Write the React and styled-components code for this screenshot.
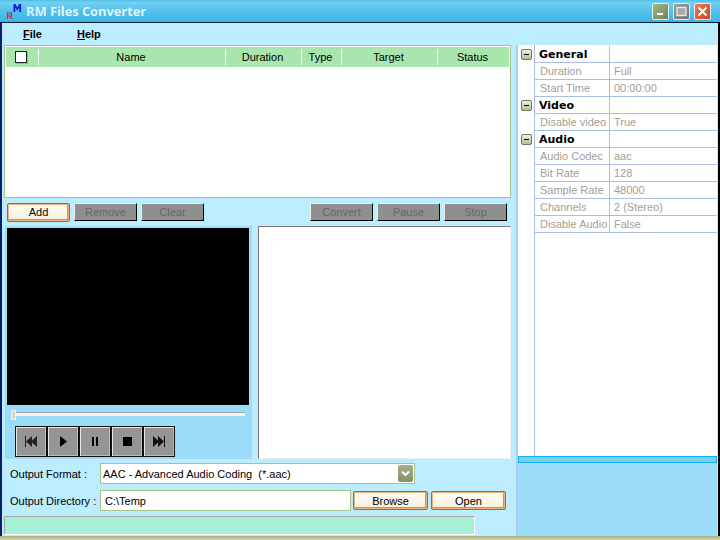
import React from 'react';
import styled, { createGlobalStyle } from 'styled-components';

const GlobalStyle = createGlobalStyle`
  html, body { margin: 0; padding: 0; width: 720px; height: 540px; overflow: hidden; }
  body { font-family: "Liberation Sans", Arial, sans-serif; font-size: 11px; color: #000; }
`;

const Window = styled.div`
  width: 720px;
  height: 540px;
  display: flex;
  flex-direction: column;
  background: #bbedff;
`;

const TitleBar = styled.div`
  height: 22px;
  flex: none;
  display: flex;
  align-items: center;
  padding: 0 9px 0 6px;
  background: linear-gradient(to bottom, #4cc0ea 0, #74d0f2 12%, #56c2ec 45%, #3cb4e4 100%);
`;

const TitleText = styled.div`
  margin-left: 3px;
  font-family: "Open Sans", sans-serif;
  font-weight: 700;
  font-size: 13px;
  letter-spacing: -0.1px;
  color: #dff4fd;
  flex: 1;
`;

const WinButton = styled.div`
  width: 15px;
  height: 15px;
  margin-left: 4px;
  border: 1px solid #dfeff0;
  border-radius: 2px;
  background: ${({ tone }) => tone};
  display: flex;
  align-items: center;
  justify-content: center;
`;

const Frame = styled.div`
  flex: 1;
  min-height: 0;
  display: flex;
  flex-direction: column;
  border-top: 1px solid #0a1a33;
  border-left: 2px solid #0b1f66;
  border-right: 2px solid #000;
`;

const MenuBar = styled.div`
  height: 22px;
  flex: none;
  display: flex;
  align-items: center;
  padding-left: 21px;
  gap: 35px;
  font-weight: 700;
`;

const MenuItem = styled.span`
  u { text-decoration: underline; }
`;

const Body = styled.div`
  flex: 1;
  min-height: 0;
  display: flex;
`;

const LeftPane = styled.div`
  width: 514px;
  flex: none;
  padding-left: 2px;
  box-sizing: border-box;
`;

const ListBox = styled.div`
  width: 507px;
  height: 153px;
  box-sizing: border-box;
  border: 1px solid #a3c587;
  background: #fff;
  padding: 1px 1px 0;
`;

const ListHeader = styled.div`
  height: 20px;
  display: grid;
  grid-template-columns: 33px 187px 76px 40px 96px 1fr;
  background: #a8e6ae;
`;

const HeaderCell = styled.div`
  display: flex;
  align-items: center;
  justify-content: center;
  margin: 2px 0;
  padding-right: 2px;
  border-right: ${({ last }) => (last ? 'none' : '1px solid #fff')};
`;

const CheckBox = styled.span`
  width: 10px;
  height: 10px;
  margin-right: 1px;
  background: #fff;
  border: 1px solid #222;
  box-shadow: 1px 1px 0 #aaa;
`;

const ActionRow = styled.div`
  height: 28px;
  width: 500px;
  margin-left: 3px;
  display: flex;
  align-items: center;
  gap: 4px;
`;

const Spacer = styled.div`
  flex: 1;
`;

const DisabledButton = styled.div`
  width: 63px;
  height: 18px;
  box-sizing: border-box;
  display: flex;
  align-items: center;
  justify-content: center;
  background: #8f8f8f;
  color: #666;
  border: 1px solid;
  border-color: #eee #000 #000 #eee;
`;

const WarmButton = styled.div`
  width: ${({ w }) => w}px;
  height: 19px;
  margin-left: ${({ gap }) => gap || 0}px;
  box-sizing: border-box;
  display: flex;
  align-items: center;
  justify-content: center;
  background: linear-gradient(to bottom, #fffdf4, #f5efdc);
  border: 1px solid #6d7f42;
  border-radius: 2px;
  box-shadow: inset 0 0 0 1px #eeb27a, inset -1px -1px 0 1px #dc8e48;
`;

const MiddleRow = styled.div`
  display: flex;
  gap: 6px;
  padding-left: 1px;
`;

const VideoPanel = styled.div`
  width: 247px;
  height: 233px;
  box-sizing: border-box;
  padding: 2px;
  background: #9bdcf8;
`;

const VideoScreen = styled.div`
  height: 177px;
  width: 242px;
  background: #000;
`;

const SliderTrack = styled.div`
  position: relative;
  height: 3px;
  margin: 7px 5px 0 5px;
  width: 233px;
  background: #f2f4f4;
  border-top: 1px solid #a5a5a5;
`;

const SliderThumb = styled.div`
  position: absolute;
  left: -1px;
  top: -3px;
  width: 3px;
  height: 8px;
  background: #ddd8cc;
  border: 1px solid #f4f0e6;
`;

const TransportRow = styled.div`
  display: flex;
  margin: 10px 0 0 8px;
`;

const TransportButton = styled.div`
  width: 32px;
  height: 31px;
  box-sizing: border-box;
  display: flex;
  align-items: center;
  justify-content: center;
  background: #959595;
  border: 1px solid #111;
  box-shadow: inset 1px 1px 0 #e6e6e6, inset -1px -1px 0 #bbb;
`;

const LogBox = styled.div`
  width: 253px;
  height: 233px;
  box-sizing: border-box;
  background: #fff;
  border: 1px solid;
  border-color: #7a7670 #eee #eee #7a7670;
`;

const FormRow = styled.div`
  display: flex;
  align-items: center;
  margin-top: ${({ top }) => top}px;
  padding-left: 6px;
`;

const FieldLabel = styled.div`
  width: 90px;
  flex: none;
`;

const Field = styled.div`
  width: ${({ w }) => w}px;
  height: 21px;
  box-sizing: border-box;
  display: flex;
  align-items: center;
  padding-left: ${({ pad }) => pad}px;
  background: #fff;
  border: 1px solid #a3c587;
`;

const FieldText = styled.span`
  flex: 1;
`;

const DropArrow = styled.div`
  width: 15px;
  height: 17px;
  margin-right: 1px;
  display: flex;
  align-items: center;
  justify-content: center;
  background: linear-gradient(to bottom, #a3b08a, #838f69);
  border-radius: 2px;
`;

const StatusBar = styled.div`
  width: 471px;
  height: 19px;
  margin-top: 5px;
  box-sizing: border-box;
  background: #a6f0d6;
  border-top: 1px solid #a9a9a9;
  border-left: 1px solid #a9a9a9;
  border-right: 1px solid #fff;
  border-bottom: 1px solid #fff;
`;

const RightPane = styled.div`
  flex: 1;
  min-width: 0;
  display: flex;
  flex-direction: column;
  border-left: 2px solid #a9cdf5;
  background: #9bdcf8;
  margin-right: 1px;
`;

const Grid = styled.div`
  height: 411px;
  flex: none;
  box-sizing: border-box;
  padding-top: 1px;
  background: linear-gradient(to right, #fff 16px, #a9bde6 16px, #a9bde6 17px, #fff 17px);
`;

const GridRow = styled.div`
  height: 17px;
  box-sizing: border-box;
  display: grid;
  grid-template-columns: 16px 76px 1fr;
`;

const Gutter = styled.div`
  display: flex;
  align-items: center;
  justify-content: center;
  background: #fff;
`;

const GridCell = styled.div`
  display: flex;
  align-items: center;
  padding-left: ${({ first, section }) => (section ? 4 : first ? 5 : 4)}px;
  border-bottom: 1px solid #a9bde6;
  border-left: ${({ first }) => (first ? '1px solid #a9bde6' : 'none')};
  border-right: ${({ first }) => (first ? '1px solid #a9bde6' : 'none')};
  background: #fff;
  color: ${({ section }) => (section ? '#000' : '#a0a094')};
  font-weight: ${({ section }) => (section ? 700 : 400)};
  ${({ section }) => section && 'font-family: "DejaVu Sans", sans-serif; font-size: 11px;'}
`;

const Expander = styled.div`
  width: 9px;
  height: 9px;
  border: 1px solid #6f7a5a;
  border-radius: 2px;
  background: linear-gradient(to bottom, #eef0e2, #b5bd98);
  display: flex;
  align-items: center;
  justify-content: center;
  &::before {
    content: '';
    width: 5px;
    height: 1px;
    background: #000;
  }
`;

const GridFooter = styled.div`
  height: 7px;
  flex: none;
  box-sizing: border-box;
  background: #7bd0f0;
  border: 1px solid #0db0f5;
`;

const BottomEdge = styled.div`
  height: 4px;
  flex: none;
  background: linear-gradient(to bottom, #a8a880, #d6dcae);
`;

const rows = [
  { section: 'General' },
  { label: 'Duration', value: 'Full' },
  { label: 'Start Time', value: '00:00:00' },
  { section: 'Video' },
  { label: 'Disable video', value: 'True' },
  { section: 'Audio' },
  { label: 'Audio Codec', value: 'aac' },
  { label: 'Bit Rate', value: '128' },
  { label: 'Sample Rate', value: '48000' },
  { label: 'Channels', value: '2 (Stereo)' },
  { label: 'Disable Audio', value: 'False' },
];

const columns = ['Name', 'Duration', 'Type', 'Target', 'Status'];

const Logo = () => (
  <svg width="17" height="16" viewBox="0 0 17 16">
    <path d="M1.5 16V10h4v3h-4M4 13l2 3" fill="none" stroke="#f01818" strokeWidth="1.2" />
    <path d="M7.5 9V1h1.8l2 3.5 2-3.5h1.8v8h-1.8V4.5l-2 3.2-2-3.2V9z" fill="#1414e0" />
  </svg>
);

const Prev = () => (
  <svg width="12" height="11" viewBox="0 0 12 11">
    <path d="M0 0h1v11H0zM7 0v11L1 5.5zM12 0v11L6 5.5z" fill="#222" />
  </svg>
);

const Next = () => (
  <svg width="12" height="11" viewBox="0 0 12 11">
    <path d="M11 0h1v11h-1zM5 0v11l6-5.5zM0 0v11l6-5.5z" fill="#111" />
  </svg>
);

const App = () => (
  <>
    <GlobalStyle />
    <Window>
      <TitleBar>
        <Logo />
        <TitleText>RM Files Converter</TitleText>
        <WinButton tone="linear-gradient(135deg, #a5b886, #6f8450)">
          <svg width="9" height="9" viewBox="0 0 9 9"><rect x="1" y="6" width="6" height="2" fill="#fff" /></svg>
        </WinButton>
        <WinButton tone="linear-gradient(135deg, #a0a0a0, #6f6f6f)">
          <svg width="11" height="11" viewBox="0 0 11 11"><rect x="1" y="1.5" width="9" height="8" fill="#a8a8a8" stroke="#e4e8e8" strokeWidth="1.4" /></svg>
        </WinButton>
        <WinButton tone="linear-gradient(135deg, #ef7d55, #c8451f)">
          <svg width="11" height="11" viewBox="0 0 11 11"><path d="M1.5 1.5l8 8M9.5 1.5l-8 8" stroke="#fff" strokeWidth="1.8" /></svg>
        </WinButton>
      </TitleBar>
      <Frame>
        <MenuBar>
          <MenuItem><u>F</u>ile</MenuItem>
          <MenuItem><u>H</u>elp</MenuItem>
        </MenuBar>
        <Body>
          <LeftPane>
            <ListBox>
              <ListHeader>
                <HeaderCell><CheckBox /></HeaderCell>
                {columns.map((name, i) => (
                  <HeaderCell key={name} last={i === columns.length - 1}>{name}</HeaderCell>
                ))}
              </ListHeader>
            </ListBox>
            <ActionRow>
              <WarmButton w={63}>Add</WarmButton>
              <DisabledButton>Remove</DisabledButton>
              <DisabledButton>Clear</DisabledButton>
              <Spacer />
              <DisabledButton>Convert</DisabledButton>
              <DisabledButton>Pause</DisabledButton>
              <DisabledButton>Stop</DisabledButton>
            </ActionRow>
            <MiddleRow>
              <VideoPanel>
                <VideoScreen />
                <SliderTrack><SliderThumb /></SliderTrack>
                <TransportRow>
                  <TransportButton><Prev /></TransportButton>
                  <TransportButton>
                    <svg width="7" height="11" viewBox="0 0 7 11"><path d="M0 0l7 5.5L0 11z" fill="#000" /></svg>
                  </TransportButton>
                  <TransportButton>
                    <svg width="6" height="9" viewBox="0 0 6 9"><path d="M0 0h2v9H0zM4 0h2v9H4z" fill="#000" /></svg>
                  </TransportButton>
                  <TransportButton>
                    <svg width="9" height="9" viewBox="0 0 9 9"><rect width="9" height="9" fill="#000" /></svg>
                  </TransportButton>
                  <TransportButton><Next /></TransportButton>
                </TransportRow>
              </VideoPanel>
              <LogBox />
            </MiddleRow>
            <FormRow top={4}>
              <FieldLabel>Output Format :</FieldLabel>
              <Field w={315} pad={2}>
                <FieldText>AAC - Advanced Audio Coding&nbsp; (*.aac)</FieldText>
                <DropArrow>
                  <svg width="9" height="7" viewBox="0 0 9 7"><path d="M1 1.5l3.5 3.5L8 1.5" fill="none" stroke="#fff" strokeWidth="2" /></svg>
                </DropArrow>
              </Field>
            </FormRow>
            <FormRow top={6}>
              <FieldLabel>Output Directory :</FieldLabel>
              <Field w={251} pad={4}>C:\Temp</Field>
              <WarmButton w={75} gap={2}>Browse</WarmButton>
              <WarmButton w={75} gap={3}>Open</WarmButton>
            </FormRow>
            <StatusBar />
          </LeftPane>
          <RightPane>
            <Grid>
              {rows.map((row) => (
                <GridRow key={row.section || row.label}>
                  <Gutter>{row.section && <Expander />}</Gutter>
                  <GridCell first section={!!row.section}>{row.section || row.label}</GridCell>
                  <GridCell>{row.value}</GridCell>
                </GridRow>
              ))}
            </Grid>
            <GridFooter />
          </RightPane>
        </Body>
      </Frame>
      <BottomEdge />
    </Window>
  </>
);

export default App;
